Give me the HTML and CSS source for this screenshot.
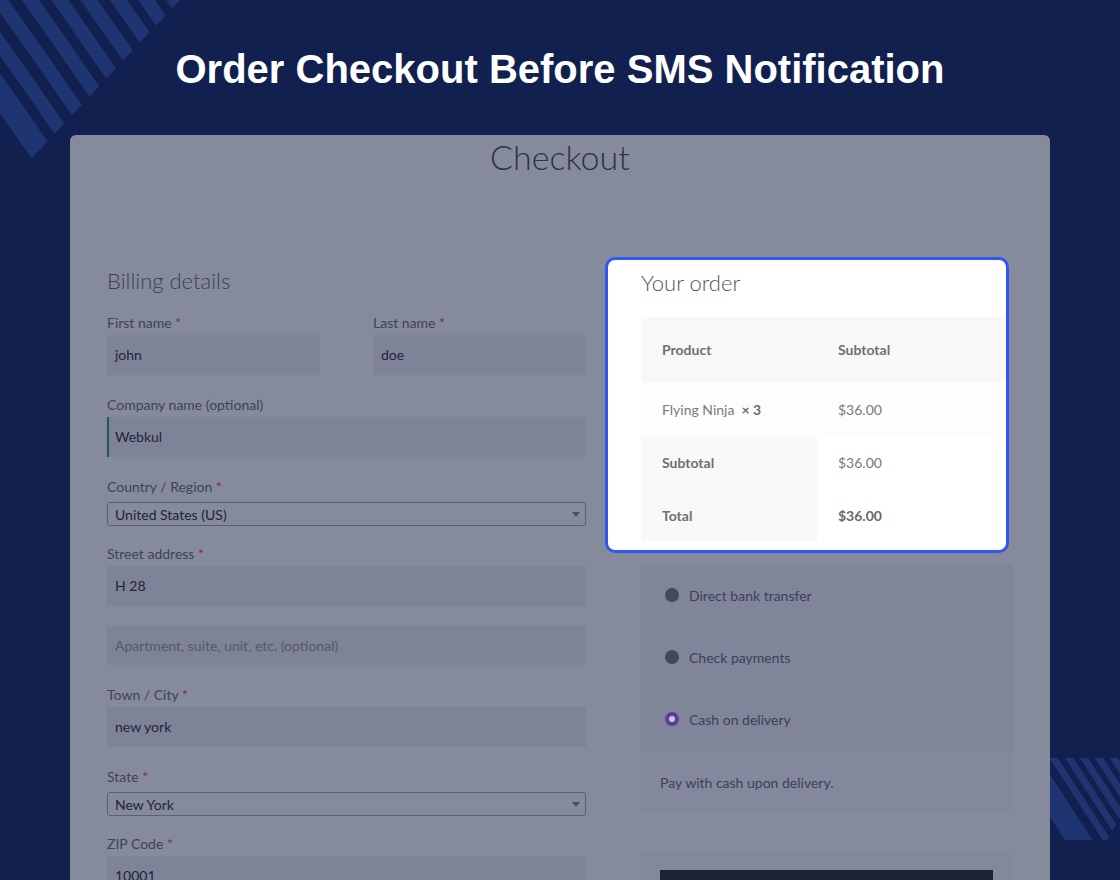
FILE: index.html
```html
<!DOCTYPE html>
<html lang="en">
<head>
  <meta charset="UTF-8" />
  <meta name="viewport" content="width=device-width, initial-scale=1.0" />
  <title>Order Checkout Before SMS Notification</title>
  <link rel="stylesheet" href="styles.css">
</head>
<body>
  <!-- corner stripes -->
  <svg class="stripes stripes-tl" width="180" height="160" viewBox="0 0 180 160">
    <defs>
      <clipPath id="cutTl"><polygon points="0,0 180,0 30,160 0,160" /></clipPath>
    </defs>
    <g clip-path="url(#cutTl)">
      <g transform="rotate(55)" fill="#1f3571">
        <rect x="-300" y="42" width="600" height="23" />
        <rect x="-300" y="18" width="600" height="14" />
        <rect x="-300" y="-7" width="600" height="14" />
        <rect x="-300" y="-32" width="600" height="14" />
        <rect x="-300" y="-56" width="600" height="14" />
        <rect x="-300" y="-80" width="600" height="14" />
        <rect x="-300" y="-104" width="600" height="14" />
        <rect x="-300" y="-127" width="600" height="14" />
        <rect x="-300" y="-150" width="600" height="14" />
      </g>
    </g>
  </svg>

  <svg class="stripes stripes-br" width="70" height="82" viewBox="0 0 70 82">
    <defs>
      <clipPath id="cutBr"><polygon points="0,0 70,0 70,60 57,82 0,82" /></clipPath>
    </defs>
    <g clip-path="url(#cutBr)">
      <g transform="rotate(57)" fill="#1f3571">
        <rect x="-200" y="9" width="400" height="23" />
        <rect x="-200" y="-6.5" width="400" height="7" />
        <rect x="-200" y="-19.5" width="400" height="7" />
        <rect x="-200" y="-32" width="400" height="7" />
        <rect x="-200" y="-44.5" width="400" height="7" />
        <rect x="-200" y="-57" width="400" height="7" />
        <rect x="-200" y="-70" width="400" height="7" />
      </g>
    </g>
  </svg>

  <h1 class="baslik">Order Checkout Before SMS Notification</h1>

  <div class="sayfa">
    <h2 class="sayfa-baslik">Checkout</h2>

    <div class="odeme">
      <!-- Sol: fatura bilgileri -->
      <div class="fatura">
        <h3>Billing details</h3>

        <div class="ikili">
          <div class="alan">
            <label>First name <span class="zorunlu">*</span></label>
            <div class="girdi">john</div>
          </div>
          <div class="alan">
            <label>Last name <span class="zorunlu">*</span></label>
            <div class="girdi">doe</div>
          </div>
        </div>

        <div class="alan">
          <label>Company name (optional)</label>
          <div class="girdi odakli">Webkul</div>
        </div>

        <div class="alan secim-alan">
          <label>Country / Region <span class="zorunlu">*</span></label>
          <div class="secim">United States (US)</div>
        </div>

        <div class="alan">
          <label>Street address <span class="zorunlu">*</span></label>
          <div class="girdi">H 28</div>
        </div>

        <div class="alan">
          <div class="girdi bos">Apartment, suite, unit, etc. (optional)</div>
        </div>

        <div class="alan">
          <label>Town / City <span class="zorunlu">*</span></label>
          <div class="girdi">new york</div>
        </div>

        <div class="alan secim-alan">
          <label>State <span class="zorunlu">*</span></label>
          <div class="secim">New York</div>
        </div>

        <div class="alan">
          <label>ZIP Code <span class="zorunlu">*</span></label>
          <div class="girdi">10001</div>
        </div>
      </div>

      <!-- Sag: siparis ozeti -->
      <div class="siparis">
        <div class="siparis-kutu">
          <h3>Your order</h3>
          <table class="tablo">
            <tr class="ust">
              <th>Product</th>
              <th>Subtotal</th>
            </tr>
            <tr class="urun">
              <td>Flying Ninja&nbsp; <strong>× 3</strong></td>
              <td>$36.00</td>
            </tr>
            <tr class="ara">
              <th>Subtotal</th>
              <td>$36.00</td>
            </tr>
            <tr class="toplam">
              <th>Total</th>
              <td><strong>$36.00</strong></td>
            </tr>
          </table>
        </div>

        <div class="yontemler">
          <ul>
            <li><span class="radyo"></span>Direct bank transfer</li>
            <li><span class="radyo"></span>Check payments</li>
            <li><span class="radyo secili"></span>Cash on delivery</li>
          </ul>
          <div class="aciklama">Pay with cash upon delivery.</div>
          <div class="bosluk"></div>
          <div class="buton-alan">
            <div class="buton"></div>
          </div>
        </div>
      </div>
    </div>
  </div>
</body>
</html>
```

FILE: styles.css
```css
* {
  margin: 0;
  padding: 0;
  box-sizing: border-box;
}

body {
  background: #11204f;
  height: 880px;
  overflow: hidden;
  position: relative;
  font-family: "Lato", sans-serif;
}

/* Kose cizgileri */
.stripes {
  position: absolute;
  display: block;
}

.stripes-tl {
  top: 0;
  left: 0;
}

.stripes-br {
  top: 758px;
  left: 1050px;
}

.baslik {
  position: relative;
  font-family: "Liberation Sans", Arial, sans-serif;
  font-weight: bold;
  font-size: 40px;
  line-height: 46px;
  color: #fff;
  text-align: center;
  margin-top: 46px;
  margin-bottom: 43px;
}

/* Karartilmis checkout sayfasi */
.sayfa {
  position: relative;
  width: 980px;
  height: 745px;
  margin: 0 auto;
  background: #858a9d;
  border-radius: 6px 6px 0 0;
  overflow: hidden;
}

.sayfa-baslik {
  font-weight: 300;
  font-size: 34px;
  line-height: 44px;
  color: #2d3248;
  text-align: center;
}

.odeme {
  display: flex;
  gap: 19px;
  margin-top: 78px;
  padding-left: 37px;
}

.fatura {
  width: 479px;
  padding-top: 9px;
}

.fatura h3 {
  font-weight: 300;
  font-size: 22px;
  line-height: 30px;
  color: #3b4056;
  margin-bottom: 17px;
}

.ikili {
  display: grid;
  grid-template-columns: 1fr 1fr;
  column-gap: 53px;
}

.alan {
  margin-bottom: 20px;
}

.alan label {
  display: block;
  font-size: 14px;
  line-height: 20px;
  color: #3e4357;
  margin-bottom: 2px;
}

.zorunlu {
  color: #8d2a2a;
}

.girdi {
  height: 40px;
  background: #7e8397;
  font-size: 14px;
  line-height: 40px;
  padding-left: 8px;
  color: #20253a;
}

.girdi.odakli {
  border-left: 2px solid #1f5a52;
  padding-left: 6px;
}

.girdi.bos {
  color: #53586c;
  height: 39px;
  line-height: 39px;
}

.secim-alan {
  margin-bottom: 18px;
}

.secim-alan label {
  margin-bottom: 5px;
}

.secim {
  position: relative;
  height: 24px;
  border: 1px solid #5b6071;
  border-radius: 3px;
  font-size: 14px;
  line-height: 23px;
  padding-left: 7px;
  color: #20253a;
}

.secim::after {
  content: "";
  position: absolute;
  right: 5px;
  top: 9px;
  border-left: 4px solid transparent;
  border-right: 4px solid transparent;
  border-top: 5px solid #4a4f62;
}

/* Siparis kutusu */
.siparis {
  width: 408px;
}

.siparis-kutu {
  width: 404px;
  background: #fff;
  border: 3px solid #2e57f6;
  border-radius: 10px;
  padding: 9px 0 9px 33px;
}

.siparis-kutu h3 {
  font-weight: 300;
  font-size: 22px;
  line-height: 28px;
  color: #555;
  margin-bottom: 20px;
}

.tablo {
  width: 100%;
  border-collapse: collapse;
  font-size: 14px;
  color: #7a7a7a;
}

.tablo th,
.tablo td {
  text-align: left;
  padding-left: 21px;
}

.tablo th {
  font-weight: bold;
  color: #6f6f6f;
}

.tablo th:first-child {
  width: 176px;
}

.tablo strong {
  color: #6a6a6a;
}

.tablo .ust {
  height: 65px;
  background: #f8f8f8;
}

.tablo .urun {
  height: 54px;
  background: #fdfdfd;
}

.tablo .ara {
  height: 53px;
}

.tablo .toplam {
  height: 52px;
}

.tablo .ara th,
.tablo .toplam th {
  background: #f8f8f8;
}

/* Odeme yontemleri */
.yontemler {
  width: 373px;
  margin-left: 35px;
  margin-top: 11px;
}

.yontemler ul {
  list-style: none;
  background: #80859a;
  padding-bottom: 2px;
}

.yontemler li {
  display: flex;
  align-items: center;
  height: 62px;
  padding-left: 25px;
  font-size: 14px;
  color: #3c4156;
}

.radyo {
  width: 14px;
  height: 14px;
  border-radius: 50%;
  background: #42485e;
  margin-right: 10px;
}

.radyo.secili {
  background: #cdc6dd;
  border: 4px solid #5b3f9f;
}

.aciklama {
  height: 61px;
  line-height: 61px;
  padding-left: 20px;
  background: #83889c;
  font-size: 14px;
  color: #3c4156;
}

.bosluk {
  height: 37px;
  background: #878b9e;
}

.buton-alan {
  background: #83889b;
  padding: 20px;
  height: 100px;
}

.buton {
  height: 60px;
  background: #1e2237;
}
```
